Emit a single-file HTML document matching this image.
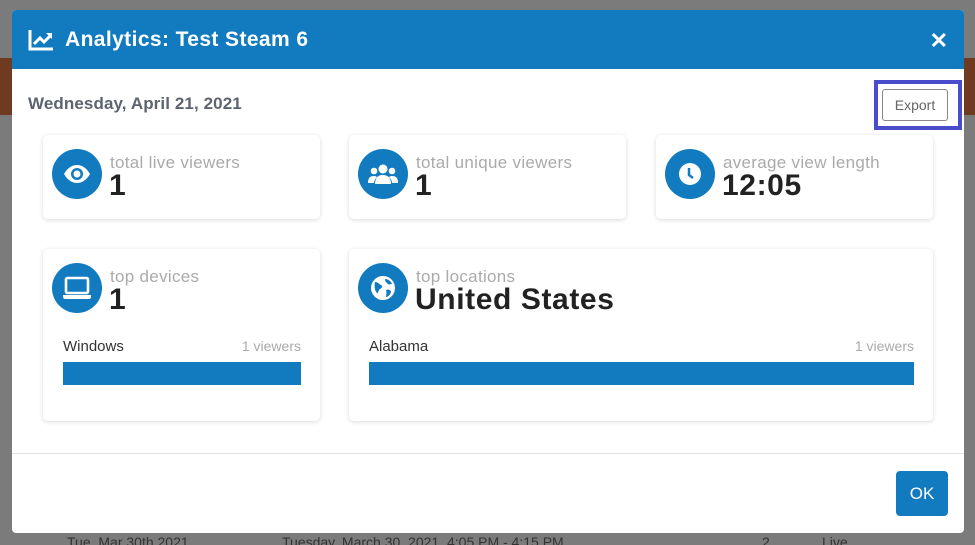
<!DOCTYPE html>
<html><head><meta charset="utf-8"><style>
*{box-sizing:border-box;margin:0;padding:0}
html,body{width:975px;height:545px;overflow:hidden}
body{background:#7b7b7b;font-family:"Liberation Sans",sans-serif;position:relative}
.strip{position:absolute;top:58px;height:57px;background:#6e3b22}
.modal{position:absolute;left:12px;top:10px;width:952px;height:523px;background:#fff;border-radius:4px;overflow:hidden}
.hdr{height:59px;background:#127bc0;color:#fff;display:flex;align-items:center;padding-left:16px;font-weight:bold;font-size:21px;letter-spacing:.4px}
.hdr svg{margin-right:11px}
.close{position:absolute;right:16px;top:18px;color:#fff;font-size:22px;font-weight:bold}
.date{position:absolute;left:16px;top:84px;font-size:17px;color:#5d6470;font-weight:bold;letter-spacing:.1px}
.exbox{position:absolute;left:862px;top:70px;width:88px;height:50px;border:4px solid #4a4ccc}
.export{position:absolute;left:4px;top:5px;width:66px;height:32px;border:1px solid #888;border-radius:3px;font-size:14px;color:#666;text-align:center;line-height:30px}
.card{position:absolute;background:#fff;border-radius:5px;box-shadow:0 1px 5px rgba(0,0,0,.15)}
.ic{position:absolute;left:9px;top:14px;width:50px;height:50px;border-radius:50%;background:#127bc0;display:flex;align-items:center;justify-content:center}
.lbl{position:absolute;left:67px;top:18px;font-size:17px;color:#aaa;white-space:nowrap;letter-spacing:.3px}
.val{position:absolute;left:66px;top:34px;font-size:30px;font-weight:bold;color:#222;white-space:nowrap;letter-spacing:.6px}
.row{position:absolute;left:20px;right:19px;top:89px;font-size:15px;color:#333}
.row span{float:right;color:#aaa;font-size:14px}
.bar{position:absolute;left:20px;right:19px;top:113px;height:23px;background:#127bc0}
.div{position:absolute;left:0;right:0;top:443px;border-top:1px solid #e2e2e2}
.ok{position:absolute;left:884px;top:461px;width:52px;height:45px;background:#127bc0;color:#fff;border-radius:4px;font-size:17px;text-align:center;line-height:45px}
.bg{position:absolute;top:534px;font-size:14px;color:#333}
</style></head><body>
<div class="strip" style="left:0;width:12px"></div>
<div class="strip" style="left:964px;width:11px"></div>
<div class="bg" style="left:67px">Tue, Mar 30th 2021</div>
<div class="bg" style="left:282px">Tuesday, March 30, 2021, 4:05 PM - 4:15 PM</div>
<div class="bg" style="left:762px">2</div>
<div class="bg" style="left:822px">Live</div>
<div class="modal">
<div class="hdr"><svg width="26" height="22" viewBox="0 0 26 22"><path d="M2 1v19h23" stroke="#fff" stroke-width="3" fill="none"/><path d="M6 15l6-6 4 4 7-7" stroke="#fff" stroke-width="3" fill="none"/><path d="M18 4h6v6z" fill="#fff"/></svg>Analytics: Test Steam 6</div>
<div class="close">✕</div>
<div class="date">Wednesday, April 21, 2021</div>
<div class="exbox"><div class="export">Export</div></div>

<div class="card" style="left:31px;top:125px;width:277px;height:84px">
<div class="ic"><svg width="28" height="20" viewBox="0 0 28 20"><path d="M1 10C5 3 10 1 14 1s9 2 13 9c-4 7-9 9-13 9S5 17 1 10z" fill="#fff"/><circle cx="14" cy="10" r="6" fill="#127bc0"/><circle cx="14" cy="10" r="3.5" fill="#fff"/></svg></div>
<div class="lbl">total live viewers</div><div class="val">1</div></div>

<div class="card" style="left:337px;top:125px;width:277px;height:84px">
<div class="ic"><svg width="32" height="22" viewBox="0 0 32 22"><circle cx="16" cy="6" r="4.5" fill="#fff"/><circle cx="7" cy="8" r="3.3" fill="#fff"/><circle cx="25" cy="8" r="3.3" fill="#fff"/><path d="M8 21c0-6 3-9 8-9s8 3 8 9z" fill="#fff"/><path d="M1 20c0-5 2-7 6-7 2 0 3 1 3 1-2 2-3 4-3 6z" fill="#fff"/><path d="M31 20c0-5-2-7-6-7-2 0-3 1-3 1 2 2 3 4 3 6z" fill="#fff"/></svg></div>
<div class="lbl">total unique viewers</div><div class="val">1</div></div>

<div class="card" style="left:644px;top:125px;width:277px;height:84px">
<div class="ic"><svg width="24" height="24" viewBox="0 0 24 24"><circle cx="12" cy="12" r="11" fill="#fff"/><path d="M11 6v7l4 3" stroke="#127bc0" stroke-width="2.5" fill="none"/></svg></div>
<div class="lbl">average view length</div><div class="val">12:05</div></div>

<div class="card" style="left:31px;top:239px;width:277px;height:172px">
<div class="ic"><svg width="30" height="24" viewBox="0 0 30 24"><rect x="4" y="2" width="22" height="15" rx="1.5" fill="none" stroke="#fff" stroke-width="2.6"/><path d="M1 19h28v2c0 1-1 2-2 2H3c-1 0-2-1-2-2z" fill="#fff"/></svg></div>
<div class="lbl">top devices</div><div class="val">1</div>
<div class="row">Windows<span>1 viewers</span></div><div class="bar"></div></div>

<div class="card" style="left:337px;top:239px;width:584px;height:172px">
<div class="ic"><svg width="26" height="26" viewBox="0 0 26 26"><circle cx="13" cy="13" r="12" fill="#fff"/><path d="M5 7c3 0 4 2 6 3s1 3-1 4-1 4-3 4c-2-2-3-6-2-11zM15 4c3 0 6 2 7 5-2 0-3 1-4 0s-3-2-3-5zM16 15c2-1 5 0 5 2-1 3-3 5-5 5 0-2 1-3 0-7z" fill="#127bc0"/></svg></div>
<div class="lbl">top locations</div><div class="val">United States</div>
<div class="row">Alabama<span>1 viewers</span></div><div class="bar"></div></div>

<div class="div"></div>
<div class="ok">OK</div>
</div>
</body></html>
